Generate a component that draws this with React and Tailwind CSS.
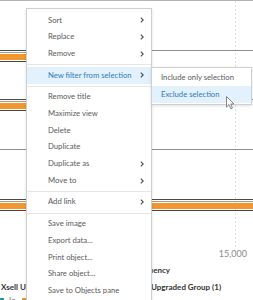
import React from 'react';

const menuItems = [
  { label: 'Sort', sub: true },
  { label: 'Replace', sub: true },
  { label: 'Remove', sub: true },
  { sep: true },
  { label: 'New filter from selection', sub: true, active: true },
  { sep: true },
  { label: 'Remove title' },
  { label: 'Maximize view' },
  { label: 'Delete' },
  { label: 'Duplicate' },
  { label: 'Duplicate as', sub: true },
  { label: 'Move to', sub: true },
  { sep: true },
  { label: 'Add link', sub: true },
  { sep: true },
  { label: 'Save image' },
  { label: 'Export data...' },
  { label: 'Print object...' },
  { label: 'Share object...' },
  { label: 'Save to Objects pane' },
];

const Chevron = () => (
  <svg width="4" height="6" viewBox="0 0 4 6" className="shrink-0">
    <path d="M0.8 0.6 L3.2 3 L0.8 5.4" fill="none" stroke="#4a4a4a" strokeWidth="1.1" />
  </svg>
);

// one grouped bar: dark edge, gray series, orange series, dark edge
const BarGroup = ({ y, x2 }) => (
  <g>
    <rect x="0" y={y} width={x2} height="1" fill="#4f4a45" />
    <rect x="0" y={y + 2} width={x2} height="1" fill="#a59a90" />
    <rect x="0" y={y + 4} width={x2} height="6" fill="#f2962f" />
    <rect x="0" y={y + 11} width={x2} height="1" fill="#4a443d" />
  </g>
);

const Chart = () => (
  <svg width="253" height="248" className="block">
    <rect x="0" y="0" width="253" height="1" fill="#b3b3b3" />
    <line x1="235.5" y1="1" x2="235.5" y2="248" stroke="#dedede" strokeDasharray="2 2" />
    <rect x="0" y="50" width="253" height="1" fill="#8e8e8e" />
    <rect x="0" y="99" width="253" height="1" fill="#8e8e8e" />
    <rect x="0" y="149" width="253" height="1" fill="#8e8e8e" />
    <BarGroup y={50} x2={120} />
    <BarGroup y={99} x2={120} />
    <BarGroup y={199} x2={253} />
  </svg>
);

const Cursor = () => (
  <svg width="9" height="14" viewBox="0 0 9 14">
    <path d="M0.5 0.5 L0.5 11 L3 8.6 L4.8 12.8 L6.4 12.1 L4.7 8 L8 8 Z" fill="#fff" stroke="#777" strokeWidth="0.9" strokeLinejoin="round" />
  </svg>
);

export default function App() {
  return (
    <div className="relative w-[253px] h-[300px] overflow-hidden bg-white font-['Lato',_'Liberation_Sans',_sans-serif]">
      {/* chart background */}
      <div className="flex flex-col">
        <Chart />
        <div className="h-[12px] flex justify-end pr-[6px] text-[9px] leading-[12px] text-[#8a8a8a]">15,000</div>
        <div className="h-[20px] flex items-center justify-end pr-[83px] text-[8px] font-bold text-[#333]">Frequency</div>
        <div className="h-[14px] flex items-center pl-[1px] text-[8px] font-bold text-[#333] whitespace-nowrap">
          <div className="w-[150px]">
            <div className="w-[25px] overflow-hidden">Xsell Upgraded Group (1)</div>
          </div>
          <span>Upgraded Group (1)</span>
        </div>
        <div className="flex items-center gap-[6px] text-[8px] text-[#777]">
          <div className="flex items-center gap-[5px]">
            <span className="w-[4px] h-[5px] bg-[#1d9aa3]" />
            <span>In</span>
          </div>
          <span className="w-[5px] h-[5px] bg-[#f2962f]" />
        </div>
      </div>

      {/* context menu */}
      <div className="absolute left-[26px] top-[8px] w-[126px] h-[300px] bg-white border border-[#cfcfcf] shadow-[0_1px_3px_rgba(0,0,0,0.12)] pt-[3px] text-[7.7px] text-[#5a5a5a] whitespace-nowrap">
        {menuItems.map((it, i) =>
          it.sep ? (
            <div key={i} className="h-[5px] flex items-center">
              <div className="w-full h-px bg-[#e6e6e6]" />
            </div>
          ) : (
            <div
              key={i}
              className={
                'h-[16.7px] flex items-center justify-between pl-[21px] pr-[7px] ' +
                (it.active ? 'bg-[#e2f1fb] text-[#2f7cba]' : '')
              }
            >
              <span>{it.label}</span>
              {it.sub && <Chevron />}
            </div>
          )
        )}
      </div>

      {/* submenu */}
      <div className="absolute left-[151px] top-[67px] w-[101px] bg-white border border-[#cfcfcf] shadow-[0_1px_3px_rgba(0,0,0,0.12)] py-[1px] text-[7.7px] whitespace-nowrap">
        <div className="h-[17px] flex items-center pl-[9px] text-[#5a5a5a]">Include only selection</div>
        <div className="h-[17px] flex items-center pl-[9px] bg-[#e2f1fb] text-[#2f7cba]">Exclude selection</div>
      </div>

      <div className="absolute left-[226px] top-[96px]">
        <Cursor />
      </div>
    </div>
  );
}
